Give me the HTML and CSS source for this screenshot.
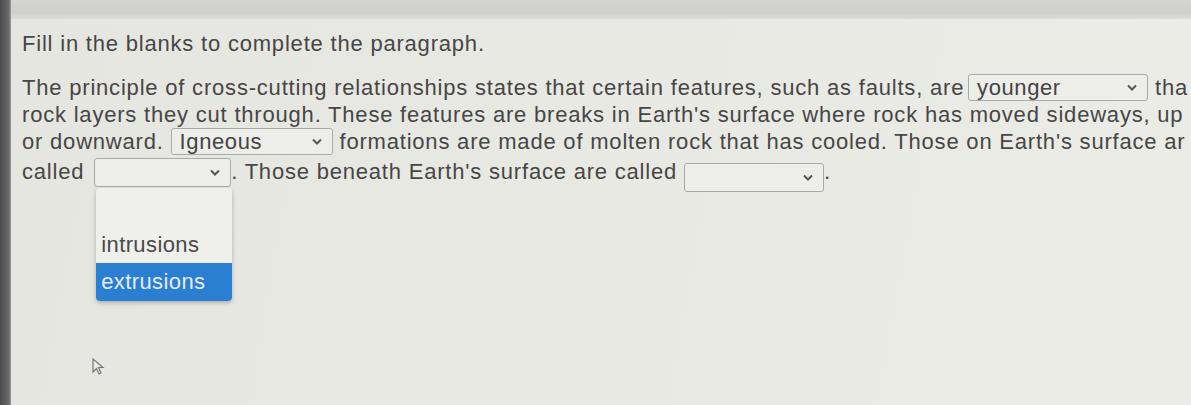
FILE: index.html
```html
<!DOCTYPE html>
<html>
<head>
<meta charset="utf-8">
<link rel="stylesheet" href="styles.css">
</head>
<body>
<div class="screen">
  <div class="bezel"></div>
  <div class="content">
    <div class="topbar"></div>
    <div class="page">
      <div class="title">Fill in the blanks to complete the paragraph.</div>
      <div class="para">
        <div class="line">The principle of cross-cutting relationships states that certain features, such as faults, are <span class="select w180"><span class="val">younger</span><svg class="chev" viewBox="0 0 10 6"><path d="M1 1 L5 5 L9 1" /></svg></span> tha</div>
        <div class="line">rock layers they cut through. These features are breaks in Earth's surface where rock has moved sideways, up</div>
        <div class="line">or downward. <span class="select w162"><span class="val">Igneous</span><svg class="chev" viewBox="0 0 10 6"><path d="M1 1 L5 5 L9 1" /></svg></span> formations are made of molten rock that has cooled. Those on Earth's surface ar</div>
        <div class="line">called <span class="select w137 open"><span class="val"></span><svg class="chev" viewBox="0 0 10 6"><path d="M1 1 L5 5 L9 1" /></svg>
            <span class="menu">
              <span class="opt blank"></span>
              <span class="opt">intrusions</span>
              <span class="opt hl">extrusions</span>
            </span>
          </span>. Those beneath Earth's surface are called <span class="select w140"><span class="val"></span><svg class="chev" viewBox="0 0 10 6"><path d="M1 1 L5 5 L9 1" /></svg></span>.</div>
      </div>
      <svg class="cursor" viewBox="0 0 14 20"><path d="M2 2 L2 15 L5.5 11.5 L8 17 L10 16 L7.5 10.5 L12 10.5 Z" /></svg>
    </div>
  </div>
</div>
</body>
</html>
```
FILE: styles.css
```css
html, body {
  margin: 0;
  padding: 0;
  width: 1191px;
  height: 405px;
  overflow: hidden;
  background: #e7e7e2;
}
.screen {
  display: flex;
  height: 405px;
}
.bezel {
  width: 11px;
  flex: none;
  background: linear-gradient(to right, #4a4a4c, #6a6a6c 80%, #9a9a98);
}
.content {
  flex: 1;
  display: flex;
  flex-direction: column;
  background: linear-gradient(100deg, #e6e6e1 0%, #e9e9e4 50%, #ecece7 100%);
  overflow: hidden;
}
.topbar {
  height: 19px;
  flex: none;
  background: linear-gradient(to bottom, #d4d4d2, #cfcfcd 70%, #dcdcd9);
}
.page {
  position: relative;
  flex: 1;
  padding: 12px 0 0 11px;
  font-family: "Liberation Sans", Arial, sans-serif;
  font-size: 22px;
  letter-spacing: 0.8px;
  color: #464646;
}
.title {
  height: 26px;
  line-height: 26px;
  margin-bottom: 17px;
}
.para {
  display: flex;
  flex-direction: column;
}
.line {
  white-space: nowrap;
  height: 27px;
  line-height: 27px;
}
.select {
  position: relative;
  display: inline-flex;
  align-items: center;
  justify-content: space-between;
  box-sizing: border-box;
  height: 27px;
  vertical-align: middle;
  border: 1px solid #a9a9a6;
  border-radius: 3px;
  background: #ededea;
  padding: 0 10px 0 8px;
  line-height: 25px;
  margin-top: -4px;
  color: #444;
  letter-spacing: 0.6px;
}
.w180 { width: 180px; margin-left: -3px; }
.w162 { width: 162px; }
.w137 { width: 137px; height: 29px; margin-top: -2px; margin-left: 3px; }
.w140 { width: 140px; height: 29px; margin-top: 8px; }
.chev {
  width: 10px;
  height: 7px;
  fill: none;
  stroke: #555;
  stroke-width: 2;
}
.menu {
  position: absolute;
  left: 1px;
  top: 29px;
  width: 136px;
  display: flex;
  flex-direction: column;
  background: #efefec;
  border-radius: 4px;
  box-shadow: 0 2px 4px rgba(0,0,0,0.25);
  overflow: hidden;
  z-index: 5;
}
.opt {
  display: block;
  height: 37px;
  line-height: 37px;
  padding-left: 5px;
  color: #4a4a4a;
  letter-spacing: 0.4px;
}
.opt.blank { height: 38px; }
.opt.hl {
  background: #2b7fd2;
  color: #e6ecf4;
  height: 38px;
}
.cursor {
  position: absolute;
  left: 80px;
  top: 338px;
  width: 14px;
  height: 20px;
  fill: #e8e8e4;
  stroke: #777;
  stroke-width: 1.2;
}
```
